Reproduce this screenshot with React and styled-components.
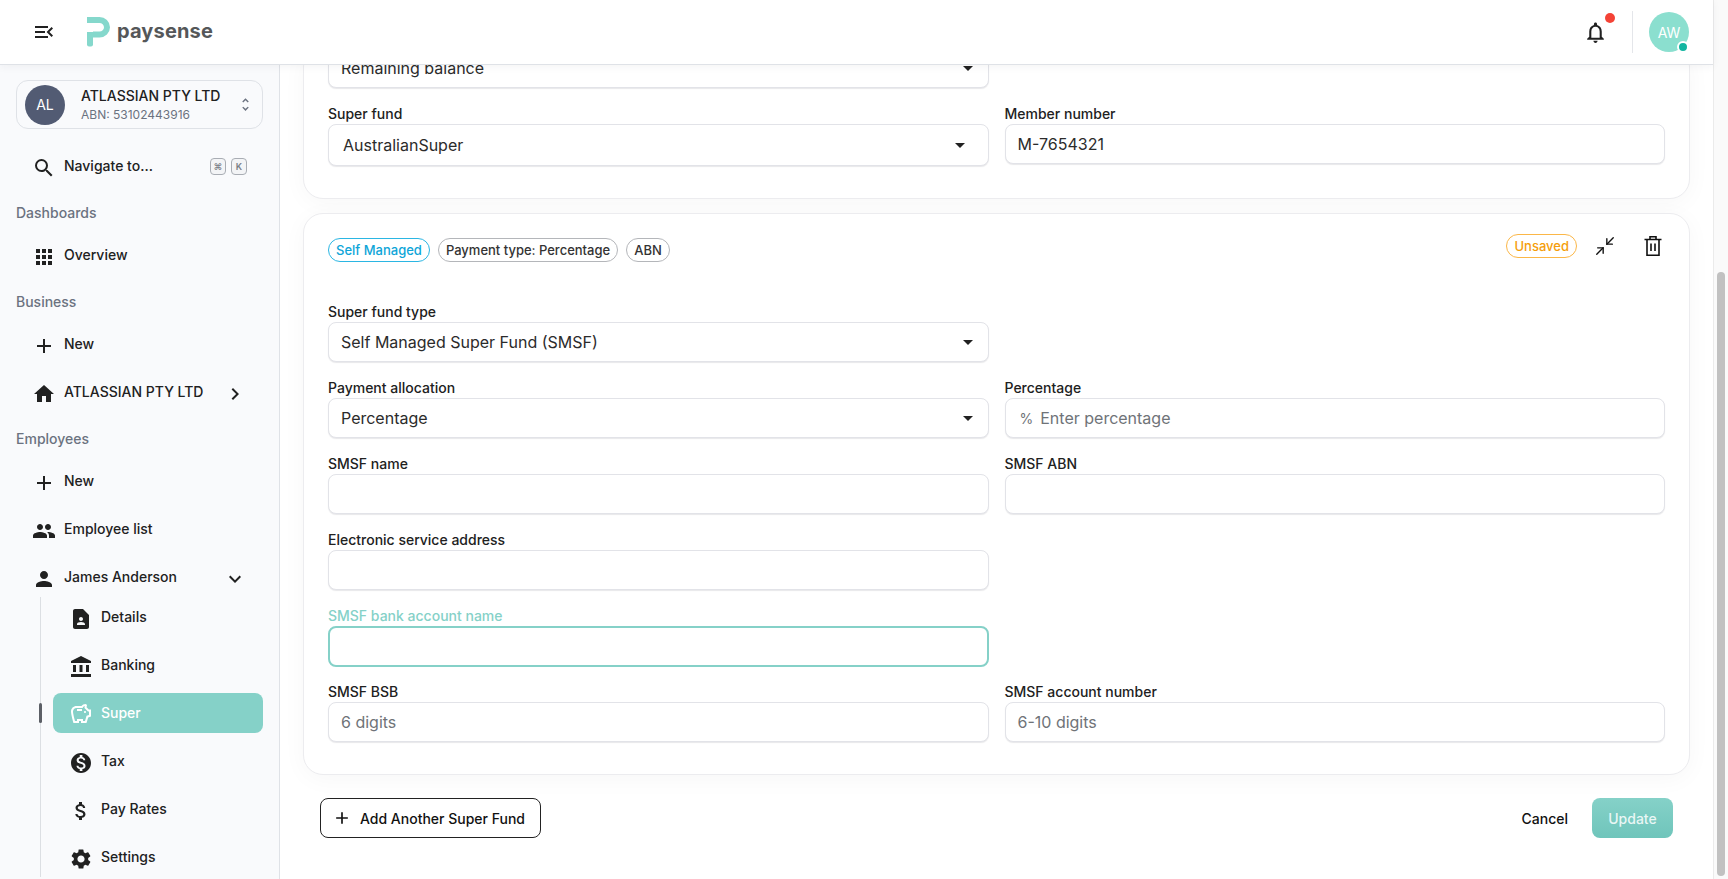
import React from 'react';
import styled, { createGlobalStyle } from 'styled-components';
import {
  MdMenuOpen, MdNotificationsNone, MdUnfoldMore, MdSearch, MdApps, MdAdd, MdHome,
  MdChevronRight, MdExpandMore, MdPeople, MdPerson, MdContactPage, MdAccountBalance,
  MdOutlineSavings, MdMonetizationOn, MdAttachMoney, MdSettings, MdArrowDropDown,
} from 'react-icons/md';
import { Minimize2 } from 'lucide-react';

const GlobalStyle = createGlobalStyle`
  html, body {
    margin: 0;
    height: 100%;
    overflow: hidden;
  }
  body {
    font-family: 'Inter', 'Liberation Sans', sans-serif;
    color: #212121;
    background: #fff;
  }
  * {
    box-sizing: border-box;
  }
`;

const Shell = styled.div`
  display: flex;
  height: 100vh;
`;

const Frame = styled.div`
  flex: 1;
  min-width: 0;
  display: flex;
  flex-direction: column;
`;

const Rail = styled.div`
  width: 15px;
  flex: none;
  position: relative;
  background: #fafafa;
  border-left: 1px solid #ebebeb;
`;

const Thumb = styled.div`
  position: absolute;
  top: 272px;
  bottom: 3px;
  left: 3px;
  width: 8px;
  border-radius: 4px;
  background: #c1c1c1;
`;

const Header = styled.header`
  height: 65px;
  flex: none;
  position: relative;
  z-index: 2;
  display: flex;
  align-items: center;
  padding: 0 24px 0 32px;
  background: #fff;
  border-bottom: 1px solid #dfe2e7;
  box-shadow: 0 2px 8px rgba(30, 40, 60, 0.05);
`;

const MenuButton = styled.span`
  display: flex;
  font-size: 24px;
  color: #212121;
  margin-right: 31px;
`;

const Logo = styled.div`
  display: flex;
  align-items: center;
  gap: 6px;
`;

const LogoText = styled.span`
  font-size: 20px;
  font-weight: 700;
  letter-spacing: 0.15px;
  color: #555759;
  margin-top: -3px;
`;

const HeaderRight = styled.div`
  margin-left: auto;
  display: flex;
  align-items: center;
`;

const Bell = styled.span`
  position: relative;
  display: flex;
  font-size: 25px;
  color: #212121;
  margin-right: 24px;

  &::after {
    content: '';
    position: absolute;
    top: -7px;
    right: -7px;
    width: 10px;
    height: 10px;
    border-radius: 50%;
    background: #f44336;
  }
`;

const Divider = styled.span`
  width: 1px;
  height: 42px;
  background: #e4e6ea;
  margin-right: 16px;
`;

const Avatar = styled.span`
  position: relative;
  width: 40px;
  height: 40px;
  flex: none;
  display: flex;
  align-items: center;
  justify-content: center;
  border-radius: 50%;
  color: #fff;
  font-size: 14px;
  background: ${(p) => p.$color};
`;

const Status = styled.span`
  position: absolute;
  right: 0;
  bottom: -1px;
  width: 12px;
  height: 12px;
  border-radius: 50%;
  background: #12b5a0;
  border: 2px solid #fff;
`;

const Body = styled.div`
  flex: 1;
  min-height: 0;
  display: flex;
`;

const Sidebar = styled.aside`
  width: 280px;
  flex: none;
  overflow: hidden;
  padding: 15px 16px 0;
  background: #f9fafc;
  border-right: 1px solid #dfe2e7;
`;

const OrgCard = styled.div`
  height: 49px;
  display: flex;
  align-items: center;
  padding: 0 8px;
  gap: 16px;
  border: 1px solid #dfe2e7;
  border-radius: 12px;
  margin-bottom: 17px;
`;

const OrgInfo = styled.div`
  flex: 1;
  min-width: 0;
`;

const OrgName = styled.div`
  font-size: 14px;
  font-weight: 500;
  line-height: 20px;
`;

const OrgAbn = styled.div`
  font-size: 12px;
  line-height: 18px;
  color: #6b7280;
`;

const Unfold = styled.span`
  display: flex;
  font-size: 17px;
  color: #6b7280;
`;

const SectionTitle = styled.div`
  height: 20px;
  margin: 17px 0 12px;
  font-size: 14px;
  font-weight: 500;
  line-height: 20px;
  color: #6b7280;
`;

const NavRow = styled.div`
  height: 40px;
  display: flex;
  align-items: center;
  gap: 8px;
  padding: 0 16px;
  border-radius: 8px;
  font-size: 14px;
  font-weight: 500;
  margin-top: ${(p) => (p.$spaced ? '8px' : '0')};
  color: ${(p) => (p.$active ? '#fff' : '#212121')};
  background: ${(p) => (p.$active ? '#85d1c8' : 'transparent')};
`;

const NavIcon = styled.span`
  display: flex;
  flex: none;
  font-size: 24px;
  margin-top: ${(p) => (p.$active ? '2px' : '4px')};
`;

const NavLabel = styled.span`
  margin-bottom: 2px;
`;

const NavTail = styled.span`
  margin-left: auto;
  display: flex;
  gap: 5px;
  font-size: 24px;
  margin-top: 4px;
`;

const Kbd = styled.kbd`
  width: 16px;
  height: 17px;
  display: flex;
  align-items: center;
  justify-content: center;
  font-family: 'Inter', sans-serif;
  font-size: 9px;
  font-weight: 600;
  color: #7a7f87;
  background: #f3f4f6;
  border: 1px solid #a9adb4;
  border-radius: 4px;
  margin-top: -3px;
`;

const SubTree = styled.div`
  position: relative;
  margin-left: 24px;
  padding: 0 0 0 12px;
  border-left: 1px solid #dcdfe3;
`;

const Marker = styled.span`
  position: absolute;
  left: -2px;
  top: 106px;
  width: 3px;
  height: 20px;
  border-radius: 2px;
  background: #5c5f66;
`;

const Main = styled.main`
  flex: 1;
  min-width: 0;
  overflow: hidden;
  display: flex;
  flex-direction: column;
  justify-content: flex-end;
  padding: 0 23px 41px 23px;
  background: #fff;
`;

const Card = styled.section`
  flex: none;
  background: #fff;
  border: 1px solid #ececef;
  border-radius: 20px;
  padding: ${(p) => (p.$first ? '0' : '16px')} 24px 32px;
  margin-bottom: ${(p) => (p.$first ? '14px' : '23px')};
  box-shadow: 0 4px 24px rgba(20, 20, 40, 0.035);
`;

const CardHead = styled.div`
  height: 32px;
  display: flex;
  justify-content: space-between;
  margin-bottom: 40px;
`;

const Chips = styled.div`
  display: flex;
  gap: 8px;
  align-self: flex-end;
`;

const Chip = styled.span`
  height: 24px;
  display: inline-flex;
  align-items: center;
  padding: 0 7px;
  border-radius: 12px;
  font-size: 13px;
  font-weight: 500;
  background: #fff;
  color: ${(p) => p.$color || '#333'};
  border: 1px solid ${(p) => p.$border || '#b4b6ba'};
`;

const CardTools = styled.div`
  display: flex;
  align-items: center;
`;

const ToolIcon = styled.span`
  width: 24px;
  display: flex;
  justify-content: center;
  margin-left: ${(p) => p.$gap};
  color: #111;
`;

const FormGrid = styled.div`
  display: grid;
  grid-template-columns: 1fr 1fr;
  column-gap: 16px;
  row-gap: 16px;
`;

const FieldBox = styled.div`
  grid-column: ${(p) => (p.$left ? '1' : '2')};
  min-width: 0;
`;

const Label = styled.div`
  height: 20px;
  font-size: 14px;
  font-weight: 500;
  line-height: 20px;
  color: ${(p) => (p.$focus ? '#85d1c8' : '#212121')};
`;

const Control = styled.div`
  display: flex;
  align-items: center;
  height: ${(p) => (p.$tall ? '42px' : p.$focus ? '41px' : '40px')};
  padding: 0 ${(p) => (p.$tall ? '20px' : '12px')} 0 ${(p) => (p.$tall ? '14px' : '12px')};
  margin-bottom: ${(p) => (p.$focus ? '-1px' : '0')};
  background: #fff;
  font-size: 16px;
  border-radius: 8px;
  color: ${(p) => (p.$muted ? '#6f7378' : '#2b2b2b')};
  border: ${(p) => (p.$focus ? '2px solid #85d1c8' : '1px solid #e2e3e8')};
  box-shadow: ${(p) => (p.$focus ? 'none' : '0 1px 1px rgba(30, 30, 50, 0.1)')};
`;

const Adorn = styled.span`
  margin: 0 7px 0 2px;
  font-size: 14px;
`;

const Caret = styled.span`
  margin-left: auto;
  display: flex;
  font-size: 24px;
  color: #212121;
  margin-right: -4px;
`;

const Footer = styled.div`
  flex: none;
  display: flex;
  align-items: center;
  padding: 0 17px;
`;

const AddButton = styled.button`
  height: 40px;
  display: flex;
  align-items: center;
  gap: 8px;
  padding: 0 15px 0 11px;
  background: #fff;
  border: 1.5px solid #222;
  border-radius: 8px;
  font: 500 14px 'Inter', sans-serif;
  color: #111;
`;

const AddIcon = styled.span`
  display: flex;
  font-size: 20px;
`;

const CancelButton = styled.button`
  margin-left: auto;
  margin-right: 24px;
  padding: 0;
  border: none;
  background: none;
  font: 500 14px 'Inter', sans-serif;
  color: #111;
`;

const UpdateButton = styled.button`
  width: 81px;
  height: 40px;
  border: none;
  border-radius: 8px;
  font: 500 14px 'Inter', sans-serif;
  color: rgba(255, 255, 255, 0.85);
  background: linear-gradient(180deg, #85d1c8, #6fc5bb);
`;

function PLogo() {
  return (
    <svg width="24" height="30" viewBox="0 0 24 30" fill="none">
      <path d="M0 0H12.5A10.5 10.25 0 0 1 12.5 20.5H6V14.5H12.5A4.5 4.25 0 0 0 12.5 6H0Z" fill="#85d8cc" />
      <path d="M0 15H6V27.5A2 2 0 0 1 4 29.5H2A2 2 0 0 1 0 27.5Z" fill="#85d8cc" />
    </svg>
  );
}

function TrashIcon() {
  return (
    <svg width="24" height="24" viewBox="0 0 24 24" fill="none" stroke="currentColor" strokeWidth="1.6">
      <path d="M3.5 5.5H20.5M6 5.5V21.2H18V5.5M9 5.5V2.8H15V5.5M10 9.5V17M14 9.5V17" />
    </svg>
  );
}

function Field({ label, value, placeholder, adorn, select, tall, focus, left }) {
  return (
    <FieldBox $left={left}>
      {label && <Label $focus={focus}>{label}</Label>}
      <Control $tall={tall} $focus={focus} $muted={!!placeholder}>
        {adorn && <Adorn>{adorn}</Adorn>}
        {value || placeholder}
        {select && <Caret><MdArrowDropDown /></Caret>}
      </Control>
    </FieldBox>
  );
}

function Nav({ icon, label, tail, active, spaced }) {
  return (
    <NavRow $active={active} $spaced={spaced}>
      <NavIcon $active={active}>{icon}</NavIcon>
      <NavLabel>{label}</NavLabel>
      {tail && <NavTail>{tail}</NavTail>}
    </NavRow>
  );
}

export default function App() {
  return (
    <Shell>
      <GlobalStyle />
      <Frame>
        <Header>
          <MenuButton><MdMenuOpen /></MenuButton>
          <Logo>
            <PLogo />
            <LogoText>paysense</LogoText>
          </Logo>
          <HeaderRight>
            <Bell><MdNotificationsNone /></Bell>
            <Divider />
            <Avatar $color="#8bdfcf">AW<Status /></Avatar>
          </HeaderRight>
        </Header>
        <Body>
          <Sidebar>
            <OrgCard>
              <Avatar $color="#525b73">AL</Avatar>
              <OrgInfo>
                <OrgName>ATLASSIAN PTY LTD</OrgName>
                <OrgAbn>ABN: 53102443916</OrgAbn>
              </OrgInfo>
              <Unfold><MdUnfoldMore /></Unfold>
            </OrgCard>
            <Nav icon={<MdSearch />} label="Navigate to..." tail={<><Kbd>⌘</Kbd><Kbd>K</Kbd></>} />
            <SectionTitle>Dashboards</SectionTitle>
            <Nav icon={<MdApps />} label="Overview" />
            <SectionTitle>Business</SectionTitle>
            <Nav icon={<MdAdd />} label="New" />
            <Nav spaced icon={<MdHome />} label="ATLASSIAN PTY LTD" tail={<MdChevronRight />} />
            <SectionTitle>Employees</SectionTitle>
            <Nav icon={<MdAdd />} label="New" />
            <Nav spaced icon={<MdPeople />} label="Employee list" />
            <Nav spaced icon={<MdPerson />} label="James Anderson" tail={<MdExpandMore />} />
            <SubTree>
              <Marker />
              <Nav icon={<MdContactPage />} label="Details" />
              <Nav spaced icon={<MdAccountBalance />} label="Banking" />
              <Nav spaced active icon={<MdOutlineSavings />} label="Super" />
              <Nav spaced icon={<MdMonetizationOn />} label="Tax" />
              <Nav spaced icon={<MdAttachMoney />} label="Pay Rates" />
              <Nav spaced icon={<MdSettings />} label="Settings" />
            </SubTree>
          </Sidebar>
          <Main>
            <Card $first>
              <FormGrid>
                <Field left select value="Remaining balance" />
                <Field left label="Super fund" select tall value="AustralianSuper" />
                <Field label="Member number" value="M-7654321" />
              </FormGrid>
            </Card>
            <Card>
              <CardHead>
                <Chips>
                  <Chip $color="#0ea5d8" $border="#2bb6e3">Self Managed</Chip>
                  <Chip>Payment type: Percentage</Chip>
                  <Chip>ABN</Chip>
                </Chips>
                <CardTools>
                  <Chip $color="#f59e0b" $border="#fbb748">Unsaved</Chip>
                  <ToolIcon $gap="16px"><Minimize2 size={22} strokeWidth={1.5} /></ToolIcon>
                  <ToolIcon $gap="24px"><TrashIcon /></ToolIcon>
                </CardTools>
              </CardHead>
              <FormGrid>
                <Field left label="Super fund type" select value="Self Managed Super Fund (SMSF)" />
                <Field left label="Payment allocation" select value="Percentage" />
                <Field label="Percentage" adorn="%" placeholder="Enter percentage" />
                <Field left label="SMSF name" />
                <Field label="SMSF ABN" />
                <Field left label="Electronic service address" />
                <Field left focus label="SMSF bank account name" />
                <Field left label="SMSF BSB" placeholder="6 digits" />
                <Field label="SMSF account number" placeholder="6-10 digits" />
              </FormGrid>
            </Card>
            <Footer>
              <AddButton>
                <AddIcon><MdAdd /></AddIcon>
                Add Another Super Fund
              </AddButton>
              <CancelButton>Cancel</CancelButton>
              <UpdateButton>Update</UpdateButton>
            </Footer>
          </Main>
        </Body>
      </Frame>
      <Rail><Thumb /></Rail>
    </Shell>
  );
}
